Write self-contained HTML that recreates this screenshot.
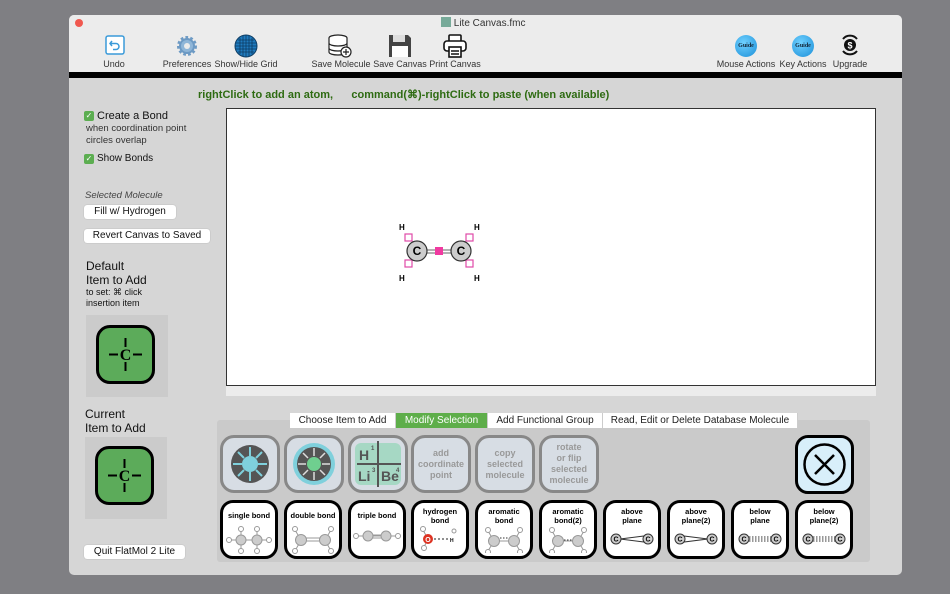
<!DOCTYPE html>
<html><head><meta charset="utf-8"><style>
*{margin:0;padding:0;box-sizing:border-box}
body{width:950px;height:594px;background:#7f7f83;font-family:"Liberation Sans",sans-serif;position:relative;overflow:hidden}
.a{position:absolute}
#win{left:69px;top:15px;width:833px;height:560px;background:#d6d6d6;border-radius:5px;overflow:hidden}
#tb{left:0;top:0;width:833px;height:57px;background:#ececec}
#blk{left:0;top:57px;width:833px;height:6px;background:#000}
.tl{font-size:9px;color:#333;text-align:center;white-space:nowrap}
.btn{background:#fff;border-radius:3px;font-size:10px;color:#111;text-align:center;line-height:14px;height:14px;box-shadow:0 0 1px #999}
.b1{width:60px;height:58px;border:3px solid #888;border-radius:14px;background:#d7dde4;font-size:9px;color:#999;font-weight:bold;text-align:center;display:flex;align-items:center;justify-content:center;line-height:11px}
.b2{width:58px;height:59px;border:3px solid #000;border-radius:13px;background:#fff;font-size:7.5px;font-weight:bold;text-align:center;padding-top:8px;line-height:9px}
.tab{top:398px;height:15px;font-size:10px;line-height:15px;text-align:center;background:#fff;color:#222;border-right:1px solid #ccc}
.cbx{width:10px;height:10px;background:#5cae51;border-radius:2px;color:#fff;font-size:8px;line-height:10px;text-align:center}
</style></head><body>
<div id="win" class="a">
 <div id="tb" class="a"></div>
 <div id="blk" class="a"></div>
 <div class="a" style="left:6px;top:4px;width:8px;height:8px;border-radius:50%;background:#f0584f"></div>
 <div class="a" style="left:372px;top:2px;font-size:10px;color:#333"><span style="display:inline-block;width:10px;height:10px;background:#7a9;vertical-align:-1px"></span> Lite Canvas.fmc</div>
 <svg class="a" style="left:36px;top:20px" width="20" height="20"><rect x="1" y="1" width="18" height="18" rx="2" fill="#fff" stroke="#3a9ad9" stroke-width="1.5"/><path d="M7 6 L5 8.5 L7 11 M5.5 8.5 H11 a3 3 0 0 1 0 6 H8" fill="none" stroke="#3a9ad9" stroke-width="1.5"/></svg>
 <div class="a tl" style="left:30px;top:44px;width:30px">Undo</div>
 <svg class="a" style="left:107px;top:20px" width="22" height="22"><circle cx="11" cy="11" r="8" fill="#6d9ac4" stroke="#6d9ac4" stroke-width="4" stroke-dasharray="2.5 2"/><circle cx="11" cy="11" r="6" fill="#8fb6d8"/><circle cx="11" cy="11" r="3" fill="#ececec"/></svg>
 <div class="a tl" style="left:92px;top:44px;width:52px">Preferences</div>
 <svg class="a" style="left:165px;top:19px" width="24" height="24"><circle cx="12" cy="12" r="11" fill="#1f7bbf" stroke="#0d3c63"/><g stroke="#0d3c63" stroke-width="0.8"><path d="M6 4v16M9 2v20M12 1v22M15 2v20M18 4v16M4 6h16M2 9h20M1 12h22M2 15h20M4 18h16"/></g></svg>
 <div class="a tl" style="left:145px;top:44px;width:64px">Show/Hide Grid</div>
 <svg class="a" style="left:259px;top:18px" width="24" height="26"><g fill="#fff" stroke="#222" stroke-width="1.2"><ellipse cx="10" cy="5" rx="9" ry="3"/><path d="M1 5v14c0 4 18 4 18 0V5M1 10c0 4 18 4 18 0M1 15c0 4 18 4 18 0"/><circle cx="18" cy="19" r="5"/><path d="M18 16v6M15 19h6"/></g></svg>
 <div class="a tl" style="left:242px;top:44px;width:60px">Save Molecule</div>
 <svg class="a" style="left:319px;top:19px" width="24" height="24"><path d="M1 1h19l3 3v19H1z" fill="#444"/><rect x="5" y="1" width="12" height="7" fill="#ddd"/><rect x="4" y="12" width="16" height="11" fill="#fff"/></svg>
 <div class="a tl" style="left:304px;top:44px;width:54px">Save Canvas</div>
 <svg class="a" style="left:374px;top:19px" width="24" height="24"><g fill="#fff" stroke="#111" stroke-width="1.6"><rect x="6" y="1" width="12" height="7" rx="1"/><rect x="1" y="7" width="22" height="10" rx="3"/><rect x="6" y="13" width="12" height="10"/><path d="M8 17h8M8 20h8"/></g></svg>
 <div class="a tl" style="left:360px;top:44px;width:52px">Print Canvas</div>
 <div class="a" style="left:666px;top:20px;width:22px;height:22px;border-radius:50%;background:radial-gradient(circle at 40% 35%,#6fd0ff,#1b8fd8);font:bold 6px 'Liberation Serif',serif;color:#123;text-align:center;line-height:22px">Guide</div>
 <div class="a tl" style="left:645px;top:44px;width:64px">Mouse Actions</div>
 <div class="a" style="left:723px;top:20px;width:22px;height:22px;border-radius:50%;background:radial-gradient(circle at 40% 35%,#6fd0ff,#1b8fd8);font:bold 6px 'Liberation Serif',serif;color:#123;text-align:center;line-height:22px">Guide</div>
 <div class="a tl" style="left:708px;top:44px;width:52px">Key Actions</div>
 <svg class="a" style="left:770px;top:18px" width="22" height="24"><path d="M4 6a9 9 0 0 1 14 0M18 18a9 9 0 0 1-14 0" fill="none" stroke="#111" stroke-width="2"/><circle cx="11" cy="12" r="6" fill="#111"/><text x="11" y="15.5" font-size="9" fill="#fff" text-anchor="middle" font-weight="bold" font-family="Liberation Sans">$</text></svg>
 <div class="a tl" style="left:760px;top:44px;width:42px">Upgrade</div>

 <div class="a" style="left:129px;top:73px;font-size:11px;font-weight:bold;color:#2e6b12;white-space:pre">rightClick to add an atom,      command(⌘)-rightClick to paste (when available)</div>

 <div class="a cbx" style="left:15px;top:96px">✓</div>
 <div class="a" style="left:28px;top:95px;font-size:11px;color:#111">Create a Bond</div>
 <div class="a" style="left:17px;top:108px;font-size:9.5px;color:#333;line-height:12px">when coordination point<br>circles overlap</div>
 <div class="a cbx" style="left:15px;top:139px">✓</div>
 <div class="a" style="left:28px;top:138px;font-size:10px;color:#111">Show Bonds</div>
 <div class="a" style="left:16px;top:175px;font-size:9.5px;font-style:italic;color:#444">Selected Molecule</div>
 <div class="a btn" style="left:15px;top:190px;width:92px">Fill w/ Hydrogen</div>
 <div class="a btn" style="left:15px;top:214px;width:126px">Revert Canvas to Saved</div>
 <div class="a" style="left:17px;top:244px;font-size:12px;color:#111;line-height:14px">Default<br>Item to Add</div>
 <div class="a" style="left:17px;top:272px;font-size:9px;color:#111;line-height:11px">to set:  ⌘ click<br>insertion item</div>
 <div class="a" style="left:17px;top:300px;width:82px;height:82px;background:#cbcbcb"></div>
 <div class="a" style="left:27px;top:310px;width:59px;height:59px;border:3px solid #000;border-radius:14px;background:#5cab5a"></div>
 <svg class="a" style="left:27px;top:310px" width="59" height="59"><g stroke="#000" stroke-width="2"><path d="M29.5 13v9M29.5 37v9M13 29.5h9M37 29.5h9"/></g><text x="29.5" y="35" text-anchor="middle" font-size="16" font-weight="bold" font-family="Liberation Serif">C</text></svg>
 <div class="a" style="left:16px;top:392px;font-size:12px;color:#111;line-height:14px">Current<br>Item to Add</div>
 <div class="a" style="left:16px;top:422px;width:82px;height:82px;background:#cbcbcb"></div>
 <div class="a" style="left:26px;top:431px;width:59px;height:59px;border:3px solid #000;border-radius:14px;background:#5cab5a"></div>
 <svg class="a" style="left:26px;top:431px" width="59" height="59"><g stroke="#000" stroke-width="2"><path d="M29.5 13v9M29.5 37v9M13 29.5h9M37 29.5h9"/></g><text x="29.5" y="35" text-anchor="middle" font-size="16" font-weight="bold" font-family="Liberation Serif">C</text></svg>
 <div class="a btn" style="left:15px;top:530px;width:101px">Quit FlatMol 2 Lite</div>

 <div class="a" style="left:157px;top:93px;width:650px;height:278px;background:#fff;border:1px solid #333"></div>
 <div class="a" style="left:157px;top:371px;width:650px;height:10px;background:#ececec"></div>
 <svg class="a" style="left:320px;top:200px" width="100" height="75"><g fill="#fff" stroke="#e04aa8" stroke-width="1.2"><rect x="16" y="19" width="7" height="7"/><rect x="16" y="45" width="7" height="7"/><rect x="77" y="19" width="7" height="7"/><rect x="77" y="45" width="7" height="7"/></g><path d="M38 35h24M38 38h24" stroke="#999" stroke-width="1.5"/><rect x="46" y="32" width="8" height="8" fill="#f03aa0"/><g fill="#ccc" stroke="#333" stroke-width="1.2"><circle cx="28" cy="36" r="10"/><circle cx="72" cy="36" r="10"/></g><g font-family="Liberation Sans" font-weight="bold"><text x="28" y="40" font-size="12" text-anchor="middle">C</text><text x="72" y="40" font-size="12" text-anchor="middle">C</text><g font-size="8"><text x="10" y="15">H</text><text x="10" y="66">H</text><text x="85" y="15">H</text><text x="85" y="66">H</text></g></g></svg>

 <div class="a" style="left:148px;top:405px;width:653px;height:142px;background:#cacaca;border-radius:3px"></div>
 <div class="a tab" style="left:221px;width:106px">Choose Item to Add</div>
 <div class="a tab" style="left:327px;width:92px;background:#5eae4a;color:#fff">Modify Selection</div>
 <div class="a tab" style="left:419px;width:115px">Add Functional Group</div>
 <div class="a tab" style="left:534px;width:195px">Read, Edit or Delete Database Molecule</div>

 <div class="a b1" style="left:151px;top:420px"><svg width="40" height="40"><circle cx="20" cy="20" r="19" fill="#555"/><circle cx="20" cy="20" r="8" fill="#7fd0dc"/><g stroke="#7fd0dc" stroke-width="2"><path d="M20 3v9M20 28v9M3 20h9M28 20h9M8 8l6 6M32 8l-6 6M8 32l6-6M32 32l-6-6"/></g></svg></div>
 <div class="a b1" style="left:215px;top:420px"><svg width="44" height="44"><circle cx="22" cy="22" r="21" fill="#7fd0dc"/><circle cx="22" cy="22" r="17" fill="#555"/><circle cx="22" cy="22" r="7" fill="#6fcf8f"/><g stroke="#ddd" stroke-width="1.5"><path d="M22 6v8M22 30v8M6 22h8M30 22h8M11 11l5 5M33 11l-5 5M11 33l5-5M33 33l-5-5"/></g></svg></div>
 <div class="a b1" style="left:279px;top:420px;background:#d7dde4"><svg width="50" height="46"><rect x="2" y="2" width="46" height="42" rx="6" fill="#a6d8c4"/><path d="M25 0v46M4 23h44" stroke="#555" stroke-width="2"/><g font-family="Liberation Sans" font-weight="bold" fill="#555"><text x="6" y="19" font-size="14">H</text><text x="18" y="9" font-size="6">1</text><text x="5" y="40" font-size="14">Li</text><text x="19" y="31" font-size="6">3</text><text x="28" y="40" font-size="14">Be</text><text x="43" y="31" font-size="6">4</text></g></svg></div>
 <div class="a b1" style="left:342px;top:420px">add<br>coordinate<br>point</div>
 <div class="a b1" style="left:406px;top:420px">copy<br>selected<br>molecule</div>
 <div class="a b1" style="left:470px;top:420px">rotate<br>or flip<br>selected<br>molecule</div>
 <div class="a" style="left:726px;top:420px;width:59px;height:59px;border:3px solid #000;border-radius:13px;background:#d8effa"><svg width="53" height="53"><circle cx="26.5" cy="26.5" r="20" fill="none" stroke="#000" stroke-width="2.5"/><path d="M17 17l19 19M36 17l-19 19" stroke="#000" stroke-width="2.5"/></svg></div>

 <div class="a b2" style="left:151px;top:485px">single bond<svg width="52" height="30" style="display:block;margin:4px auto 0"><g stroke="#999" fill="#fff"><path d="M8 16h36M18 16V5M18 16v11M34 16V5M34 16v11"/><circle cx="18" cy="5" r="2.5"/><circle cx="18" cy="27" r="2.5"/><circle cx="34" cy="5" r="2.5"/><circle cx="34" cy="27" r="2.5"/><circle cx="6" cy="16" r="2.5"/><circle cx="46" cy="16" r="2.5"/><circle cx="18" cy="16" r="5" fill="#ccc"/><circle cx="34" cy="16" r="5" fill="#ccc"/></g></svg></div>
 <div class="a b2" style="left:215px;top:485px">double bond<svg width="52" height="30" style="display:block;margin:4px auto 0"><g stroke="#999" fill="#fff"><path d="M14 14h24M14 17h24M14 16L8 6M14 16L8 27M38 16l6-10M38 16l6 11"/><circle cx="8" cy="5" r="2.5"/><circle cx="8" cy="27" r="2.5"/><circle cx="44" cy="5" r="2.5"/><circle cx="44" cy="27" r="2.5"/><circle cx="14" cy="16" r="5.5" fill="#ccc"/><circle cx="38" cy="16" r="5.5" fill="#ccc"/></g></svg></div>
 <div class="a b2" style="left:279px;top:485px">triple bond<svg width="52" height="30" style="display:block;margin:6px auto 0"><g stroke="#999" fill="#fff"><path d="M6 10h40M18 9h16M18 12h16"/><circle cx="5" cy="10" r="2.5"/><circle cx="47" cy="10" r="2.5"/><circle cx="17" cy="10" r="5" fill="#ccc"/><circle cx="35" cy="10" r="5" fill="#ccc"/></g></svg></div>
 <div class="a b2" style="left:342px;top:485px;padding-top:4px">hydrogen<br>bond<svg width="52" height="26" style="display:block;margin:0 auto"><g stroke="#999" fill="#fff"><path d="M14 14L9 5M14 14l-4 8"/><circle cx="9" cy="4" r="2.5"/><circle cx="10" cy="23" r="2.5"/><circle cx="40" cy="6" r="2"/></g><path d="M20 14h14" stroke="#222" stroke-dasharray="2 2"/><circle cx="14" cy="14" r="5" fill="#d32"/><text x="14" y="17" font-size="7" fill="#fff" text-anchor="middle" font-weight="bold">O</text><text x="36" y="17" font-size="5" font-weight="bold">H</text></svg></div>
 <div class="a b2" style="left:406px;top:485px;padding-top:4px">aromatic<br>bond<svg width="52" height="28" style="display:block;margin:0 auto"><g stroke="#999" fill="#fff"><path d="M16 16h20"/><path d="M16 13h20" stroke="#333" stroke-dasharray="1.5 1.5"/><path d="M16 16L10 6M16 16L10 26M36 16l6-10M36 16l6 10"/><circle cx="10" cy="5" r="2.5"/><circle cx="10" cy="27" r="2.5"/><circle cx="42" cy="5" r="2.5"/><circle cx="42" cy="27" r="2.5"/><circle cx="16" cy="16" r="5.5" fill="#ccc"/><circle cx="36" cy="16" r="5.5" fill="#ccc"/></g></svg></div>
 <div class="a b2" style="left:470px;top:485px;padding-top:4px">aromatic<br>bond(2)<svg width="52" height="28" style="display:block;margin:0 auto"><g stroke="#999" fill="#fff"><path d="M16 16h20"/><path d="M16 15h20" stroke="#333" stroke-dasharray="1.5 1.5"/><path d="M16 16L10 6M16 16L10 26M36 16l6-10M36 16l6 10"/><circle cx="10" cy="5" r="2.5"/><circle cx="10" cy="27" r="2.5"/><circle cx="42" cy="5" r="2.5"/><circle cx="42" cy="27" r="2.5"/><circle cx="16" cy="16" r="5.5" fill="#ccc"/><circle cx="36" cy="16" r="5.5" fill="#ccc"/></g></svg></div>
 <div class="a b2" style="left:534px;top:485px;padding-top:4px">above<br>plane<svg width="52" height="20" style="display:block;margin:4px auto 0"><path d="M14 10l24-3v6z" fill="#fff" stroke="#333"/><g fill="#ccc" stroke="#333"><circle cx="10" cy="10" r="5"/><circle cx="42" cy="10" r="5"/></g><text x="10" y="12.5" font-size="7" text-anchor="middle" font-weight="bold">C</text><text x="42" y="12.5" font-size="7" text-anchor="middle" font-weight="bold">C</text></svg></div>
 <div class="a b2" style="left:598px;top:485px;padding-top:4px">above<br>plane(2)<svg width="52" height="20" style="display:block;margin:4px auto 0"><path d="M14 7l24 3l-24 3z" fill="#fff" stroke="#333"/><g fill="#ccc" stroke="#333"><circle cx="10" cy="10" r="5"/><circle cx="42" cy="10" r="5"/></g><text x="10" y="12.5" font-size="7" text-anchor="middle" font-weight="bold">C</text><text x="42" y="12.5" font-size="7" text-anchor="middle" font-weight="bold">C</text></svg></div>
 <div class="a b2" style="left:662px;top:485px;padding-top:4px">below<br>plane<svg width="52" height="20" style="display:block;margin:4px auto 0"><path d="M15 10h22M15 8h22M15 12h22" stroke="#333" stroke-dasharray="1.5 1.5"/><g fill="#ccc" stroke="#333"><circle cx="10" cy="10" r="5"/><circle cx="42" cy="10" r="5"/></g><text x="10" y="12.5" font-size="7" text-anchor="middle" font-weight="bold">C</text><text x="42" y="12.5" font-size="7" text-anchor="middle" font-weight="bold">C</text></svg></div>
 <div class="a b2" style="left:726px;top:485px;padding-top:4px">below<br>plane(2)<svg width="52" height="20" style="display:block;margin:4px auto 0"><path d="M15 10h22M15 8h22M15 12h22" stroke="#333" stroke-dasharray="1.5 1.5"/><g fill="#ccc" stroke="#333"><circle cx="10" cy="10" r="5"/><circle cx="42" cy="10" r="5"/></g><text x="10" y="12.5" font-size="7" text-anchor="middle" font-weight="bold">C</text><text x="42" y="12.5" font-size="7" text-anchor="middle" font-weight="bold">C</text></svg></div>
</div>
</body></html>
